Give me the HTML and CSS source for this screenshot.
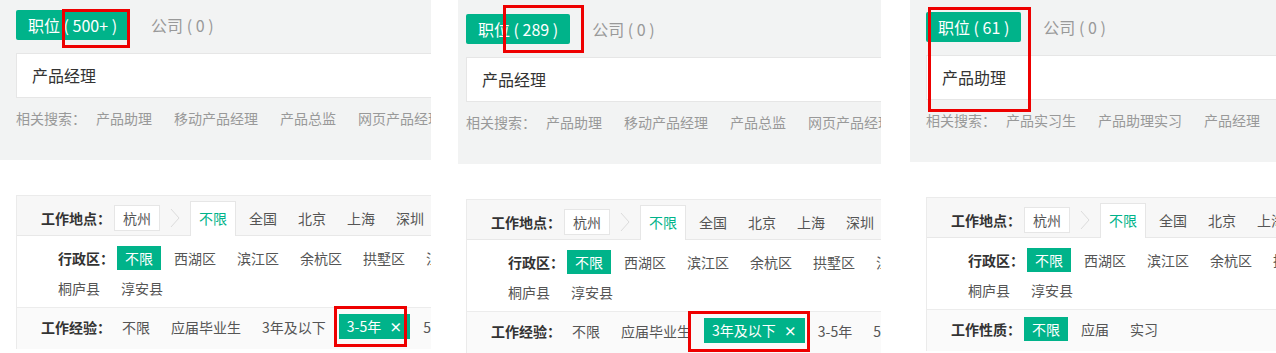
FILE: index.html
```html
<!DOCTYPE html>
<html lang="zh-CN">
<head>
  <meta charset="UTF-8">
  <meta name="viewport" content="width=device-width, initial-scale=1.0">
  <title>职位搜索筛选</title>
  <link rel="stylesheet" href="styles.css">
</head>
<body>
  <div class="board">

    <!-- 第一张：产品经理 / 3-5年 -->
    <section class="shot shot-one">
      <div class="search">
        <div class="search-tabs">
          <span class="tab tab-on">职位 ( 500+ )</span>
          <span class="tab">公司 ( 0 )</span>
        </div>
        <div class="search-box">产品经理</div>
        <div class="related">
          <span class="related-label">相关搜索：</span>
          <span class="related-item">产品助理</span>
          <span class="related-item">移动产品经理</span>
          <span class="related-item">产品总监</span>
          <span class="related-item">网页产品经理</span>
        </div>
      </div>
      <div class="filter">
        <div class="row-city">
          <span class="filter-label">工作地点：</span>
          <span class="opt city-current">杭州</span>
          <svg class="chevron" width="10" height="20" viewBox="0 0 10 20"><polyline points="1,1 9,10 1,19" fill="none" stroke="#dcdcdc" stroke-width="1"/></svg>
          <span class="opt city-tab">不限</span>
          <span class="opt">全国</span>
          <span class="opt">北京</span>
          <span class="opt">上海</span>
          <span class="opt">深圳</span>
          <span class="opt">广州</span>
        </div>
        <div class="district">
          <div class="district-line">
            <span class="filter-label">行政区：</span>
            <span class="opt opt-on">不限</span>
            <span class="opt">西湖区</span>
            <span class="opt">滨江区</span>
            <span class="opt">余杭区</span>
            <span class="opt">拱墅区</span>
            <span class="opt">江干区</span>
          </div>
          <div class="district-line">
            <span class="opt">桐庐县</span>
            <span class="opt">淳安县</span>
          </div>
        </div>
        <div class="row-exp">
          <span class="filter-label">工作经验：</span>
          <span class="opt">不限</span>
          <span class="opt">应届毕业生</span>
          <span class="opt">3年及以下</span>
          <span class="opt opt-on">3-5年<b class="close">×</b></span>
          <span class="opt">5-10年</span>
        </div>
      </div>
      <div class="mark mark-one-tab"></div>
      <div class="mark mark-one-exp"></div>
    </section>

    <!-- 第二张：产品经理 / 3年及以下 -->
    <section class="shot shot-two">
      <div class="search">
        <div class="search-tabs">
          <span class="tab tab-on">职位 ( 289 )</span>
          <span class="tab">公司 ( 0 )</span>
        </div>
        <div class="search-box">产品经理</div>
        <div class="related">
          <span class="related-label">相关搜索：</span>
          <span class="related-item">产品助理</span>
          <span class="related-item">移动产品经理</span>
          <span class="related-item">产品总监</span>
          <span class="related-item">网页产品经理</span>
        </div>
      </div>
      <div class="filter">
        <div class="row-city">
          <span class="filter-label">工作地点：</span>
          <span class="opt city-current">杭州</span>
          <svg class="chevron" width="10" height="20" viewBox="0 0 10 20"><polyline points="1,1 9,10 1,19" fill="none" stroke="#dcdcdc" stroke-width="1"/></svg>
          <span class="opt city-tab">不限</span>
          <span class="opt">全国</span>
          <span class="opt">北京</span>
          <span class="opt">上海</span>
          <span class="opt">深圳</span>
          <span class="opt">广州</span>
        </div>
        <div class="district">
          <div class="district-line">
            <span class="filter-label">行政区：</span>
            <span class="opt opt-on">不限</span>
            <span class="opt">西湖区</span>
            <span class="opt">滨江区</span>
            <span class="opt">余杭区</span>
            <span class="opt">拱墅区</span>
            <span class="opt">江干区</span>
          </div>
          <div class="district-line">
            <span class="opt">桐庐县</span>
            <span class="opt">淳安县</span>
          </div>
        </div>
        <div class="row-exp">
          <span class="filter-label">工作经验：</span>
          <span class="opt">不限</span>
          <span class="opt">应届毕业生</span>
          <span class="opt opt-on">3年及以下<b class="close">×</b></span>
          <span class="opt">3-5年</span>
          <span class="opt">5-10年</span>
        </div>
      </div>
      <div class="mark mark-two-tab"></div>
      <div class="mark mark-two-exp"></div>
    </section>

    <!-- 第三张：产品助理 / 工作性质 -->
    <section class="shot shot-three">
      <div class="search">
        <div class="search-tabs">
          <span class="tab tab-on">职位 ( 61 )</span>
          <span class="tab">公司 ( 0 )</span>
        </div>
        <div class="search-box">产品助理</div>
        <div class="related">
          <span class="related-label">相关搜索：</span>
          <span class="related-item">产品实习生</span>
          <span class="related-item">产品助理实习</span>
          <span class="related-item">产品经理</span>
        </div>
      </div>
      <div class="filter">
        <div class="row-city">
          <span class="filter-label">工作地点：</span>
          <span class="opt city-current">杭州</span>
          <svg class="chevron" width="10" height="20" viewBox="0 0 10 20"><polyline points="1,1 9,10 1,19" fill="none" stroke="#dcdcdc" stroke-width="1"/></svg>
          <span class="opt city-tab">不限</span>
          <span class="opt">全国</span>
          <span class="opt">北京</span>
          <span class="opt">上海</span>
          <span class="opt">深圳</span>
        </div>
        <div class="district">
          <div class="district-line">
            <span class="filter-label">行政区：</span>
            <span class="opt opt-on">不限</span>
            <span class="opt">西湖区</span>
            <span class="opt">滨江区</span>
            <span class="opt">余杭区</span>
            <span class="opt">拱墅区</span>
          </div>
          <div class="district-line">
            <span class="opt">桐庐县</span>
            <span class="opt">淳安县</span>
          </div>
        </div>
        <div class="row-exp">
          <span class="filter-label">工作性质：</span>
          <span class="opt opt-on">不限</span>
          <span class="opt">应届</span>
          <span class="opt">实习</span>
        </div>
      </div>
      <div class="mark mark-three-tab"></div>
    </section>

  </div>
</body>
</html>
```

FILE: styles.css
```css
* { box-sizing: border-box; }
body { margin: 0; background: #fff; font-family: "Microsoft YaHei", "Noto Sans CJK SC", sans-serif; font-size: 14px; color: #333; }

.board { display: flex; align-items: flex-start; width: 1276px; height: 353px; overflow: hidden; }
.shot { position: relative; flex: none; height: 353px; overflow: hidden; }
.shot-one { width: 431px; --inset: 16px; --top: 10px; }
.shot-two { width: 423px; margin-left: 27px; --inset: 8px; --top: 14px; }
.shot-three { width: 366px; margin-left: 29px; --inset: 16px; --top: 12px; }

/* search area */
.search { background: #f2f3f3; padding: var(--top) 0 32px var(--inset); }
.search-tabs { display: flex; align-items: center; height: 30px; }
.tab { font-size: 16px; line-height: 30px; color: #999; white-space: nowrap; }
.tab-on { background: #00b38a; color: #fff; padding: 0 12px; border-radius: 2px; margin-right: 22px; }
.search-box { margin-top: 13px; margin-right: -4px; height: 45px; line-height: 43px; padding-left: 15px; background: #fff; border: 1px solid #e6e6e6; font-size: 16px; color: #333; }
.related { display: flex; margin-top: 10px; line-height: 20px; color: #999; white-space: nowrap; }
.related-label { margin-right: 10px; }
.related-item { margin-right: 22px; }

/* filter card */
.filter { margin: 35px 0 0 var(--inset); width: 760px; border: 1px solid #ebebeb; border-bottom: none; }
.opt { flex: none; padding: 0 8px; line-height: 24px; color: #555; white-space: nowrap; }
.opt-on { background: #00b38a; color: #fff; }
.close { margin-left: 8px; font-size: 13px; }
.filter-label { flex: none; margin-right: -2px; font-weight: bold; color: #333; white-space: nowrap; }

.row-city { display: flex; align-items: center; gap: 5px; height: 40px; padding: 4px 0 0 24px; background: #f7f7f7; border-bottom: 1px solid #e8e8e8; }
.city-current { height: 26px; background: #fff; border: 1px solid #e6e6e6; }
.chevron { flex: none; margin: 0 5px; }
.city-tab { align-self: flex-end; height: 35px; line-height: 33px; margin-bottom: -1px; background: #fff; border: 1px solid #e6e6e6; border-bottom: none; color: #00b38a; }

.district { display: flex; flex-direction: column; gap: 6px; padding: 10px 0 7px 33px; border-bottom: 1px solid #ececec; }
.district-line { display: flex; gap: 5px; }
.district .filter-label { margin-left: 8px; line-height: 24px; }

.row-exp { display: flex; align-items: center; gap: 5px; height: 41px; padding: 0 0 4px 24px; background: #fafafa; }

/* red annotation boxes */
.mark { position: absolute; border: 3px solid #e00; }
.mark-one-tab { left: 62px; top: 9px; width: 68px; height: 39px; }
.mark-one-exp { left: 334px; top: 306px; width: 73px; height: 41px; }
.mark-two-tab { left: 45px; top: 5px; width: 81px; height: 48px; }
.mark-two-exp { left: 230px; top: 311px; width: 122px; height: 41px; }
.mark-three-tab { left: 18px; top: 7px; width: 103px; height: 105px; }
```
